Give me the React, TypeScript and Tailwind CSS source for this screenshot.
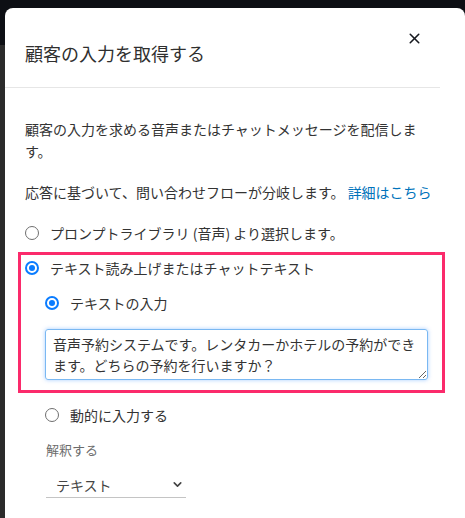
import { X, ChevronDown } from "lucide-react";

function Radio({ checked }: { checked?: boolean }) {
  return checked ? (
    <span className="flex h-[14px] w-[14px] shrink-0 items-center justify-center rounded-full border-[2px] border-[#0a7cff] bg-white">
      <span className="h-[6px] w-[6px] rounded-full bg-[#0a7cff]" />
    </span>
  ) : (
    <span className="h-[14px] w-[14px] shrink-0 rounded-full border border-[#6f6f6f] bg-white" />
  );
}

export default function App() {
  return (
    <div
      className="h-[518px] w-[465px] overflow-hidden bg-[linear-gradient(to_bottom,#0d0f14_45px,#2b2b2b_45px)] pl-[5px] pt-[8px] text-[#333]"
      style={{ fontFamily: '"Noto Sans CJK JP", "Noto Sans", sans-serif' }}
    >
      <div className="h-[520px] w-[460px] rounded-t-[8px] bg-white">
        <div className="flex h-[80px] w-[435px] items-start justify-between border-b border-[#e6e6e6] pl-5 pr-[14px] pt-[18px]">
          <h2 className="mt-[14px] text-[18px] leading-[26px] font-normal text-[#2f2f2f]">
            顧客の入力を取得する
          </h2>
          <button className="flex h-6 w-6 items-center justify-center text-[#16191f]">
            <X size={17} strokeWidth={2.2} />
          </button>
        </div>

        <div className="w-[450px] pl-5 pt-[30px] text-[14px] leading-[22px]">
          <p className="w-[400px]">
            顧客の入力を求める音声またはチャットメッセージを配信します。
          </p>
          <p className="mt-[19px] whitespace-nowrap">
            応答に基づいて、問い合わせフローが分岐します。{" "}
            <a className="text-[#0073bb]">詳細はこちら</a>
          </p>
          <label className="mt-[19px] flex items-center gap-[11px]">
            <Radio />
            <span>プロンプトライブラリ (音声) より選択します。</span>
          </label>
        </div>

        <div className="ml-[13px] mt-[8px] w-[427px] border-[3px] border-[#fb2a6b] pb-[10px] pl-1 pt-[2px] text-[14px] leading-[22px]">
          <label className="flex items-center gap-[11px]">
            <Radio checked />
            <span>テキスト読み上げまたはチャットテキスト</span>
          </label>
          <div className="pl-[20px]">
            <label className="mt-[13px] flex items-center gap-[11px]">
              <Radio checked />
              <span>テキストの入力</span>
            </label>
            <textarea
              className="mt-[15px] block h-[51px] w-[383px] resize-y rounded-[3px] border border-[#7ab8f2] px-[7px] py-[4px] text-[14px] leading-[21px] text-[#333] shadow-[0_0_4px_rgba(0,115,255,0.35)] outline-none"
              defaultValue="音声予約システムです。レンタカーかホテルの予約ができます。どちらの予約を行いますか？"
            />
          </div>
        </div>

        <div className="pl-[40px] text-[14px] leading-[22px]">
          <label className="mt-[11px] flex items-center gap-[11px]">
            <Radio />
            <span>動的に入力する</span>
          </label>
          <div className="mt-[14px] pl-px text-[13px] leading-[20px] text-[#6b6b6b]">
            解釈する
          </div>
          <div className="ml-px mt-[12px] flex h-[26px] w-[140px] items-center justify-between border-b border-[#c4c4c4] pl-[10px] pr-[2px]">
            <span className="text-[14px] text-[#444]">テキスト</span>
            <ChevronDown size={13} strokeWidth={3} className="text-[#444]" />
          </div>
        </div>
      </div>
    </div>
  );
}
